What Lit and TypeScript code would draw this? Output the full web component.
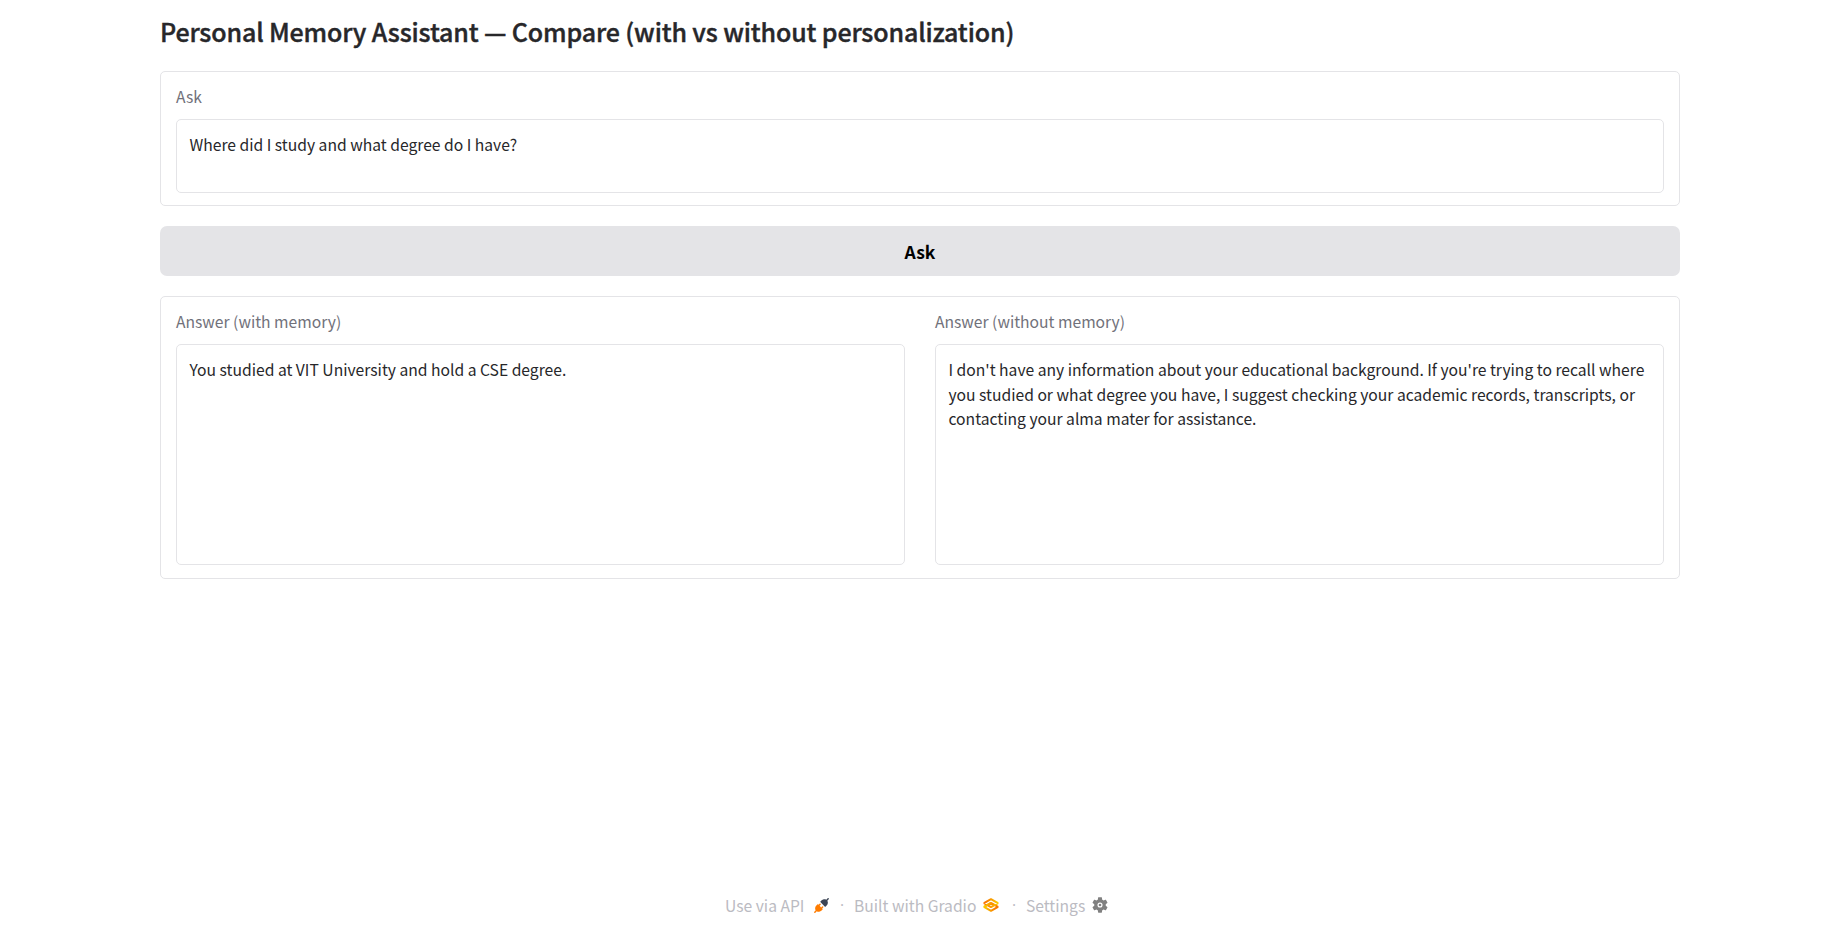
import { LitElement, html, css } from "lit";
import { customElement, property } from "lit/decorators.js";

@customElement("text-field")
class TextField extends LitElement {
  @property() label = "";
  @property() value = "";

  static styles = css`
    :host { display: flex; flex-direction: column; flex: 1; min-width: 0; }
    .label { font-size: 15.65px; line-height: 24px; color: #71717a; margin-bottom: 10px; }
    .box {
      flex: 1; box-sizing: border-box; padding: 13px 13px 13px 12.5px; border: 1px solid #e4e4e7;
      border-radius: 5px; font-size: 15.66px; line-height: 24.5px; color: #27272a;
    }
  `;

  render() {
    return html`<div class="label">${this.label}</div><div class="box">${this.value}</div>`;
  }
}

@customElement("app-root")
class AppRoot extends LitElement {
  static styles = css`
    :host {
      display: flex; flex-direction: column; box-sizing: border-box; height: 934px;
      padding: 13px 168px 16px 160px; background: #fff; color: #27272a;
      font-family: "Noto Sans CJK SC", "Noto Sans", sans-serif;
    }
    .title {
      margin: 0 0 22px; font-size: 25px; font-weight: 500; line-height: 36px;
      letter-spacing: -0.14px; -webkit-text-stroke: 0.4px #27272a;
    }
    .panel {
      display: flex; gap: 30px; box-sizing: border-box; padding: 13px 15px 12px;
      border: 1px solid #e4e4e7; border-radius: 5px;
    }
    .question { height: 135px; }
    .answers { height: 283px; padding-bottom: 13px; }
    .ask {
      margin: 20px 0; height: 50px; border: 0; border-radius: 7px; background: #e4e4e7; padding: 2px 0 0;
      color: #000; font: 600 17.5px/48px "Noto Sans CJK SC", sans-serif; text-align: center;
    }
    .footer {
      display: flex; align-items: center; margin-top: auto; padding-left: 565px;
      height: 26px; font-size: 15.65px; color: #bbbbc2;
    }
    .link { display: flex; align-items: center; }
    .api { width: 105px; }
    .gradio { width: 148px; }
    .icon { display: block; }
    .plug { width: 15px; height: 15px; margin-left: 10px; }
    .logo { width: 20px; height: 20px; margin-left: 5px; }
    .gear { width: 16px; height: 16px; margin-left: 7px; }
    .dot { width: 24px; text-align: center; font-family: "Open Sans", sans-serif; }
  `;

  render() {
    return html`
      <h1 class="title">Personal Memory Assistant — Compare (with vs without personalization)</h1>
      <section class="panel question">
        <text-field label="Ask" value="Where did I study and what degree do I have?"></text-field>
      </section>
      <button class="ask">Ask</button>
      <section class="panel answers">
        <text-field label="Answer (with memory)" value="You studied at VIT University and hold a CSE degree."></text-field>
        <text-field
          label="Answer (without memory)"
          value="I don't have any information about your educational background. If you're trying to recall where you studied or what degree you have, I suggest checking your academic records, transcripts, or contacting your alma mater for assistance."
        ></text-field>
      </section>
      <footer class="footer">
        <span class="link api">Use via API
          <svg class="icon plug" viewBox="0.5 0.5 27 27">
            <path fill="#3c4555" d="M26.94 2.94a1.33 1.33 0 0 0-1.88-1.88L22.57 3.54C21.12 2.59 19.54 2.43 18.18 2.64C16.55 2.89 15.11 3.67 14.39 4.39L12.39 6.39a1.33 1.33 0 0 0 0 1.89L19.72 15.61a1.33 1.33 0 0 0 1.89 0L23.61 13.61C24.33 12.89 25.11 11.45 25.36 9.82C25.57 8.46 25.41 6.88 24.46 5.43Z"/>
            <path fill="#ff7c00" d="M12.28 12.94a1.33 1.33 0 0 0-1.89-1.88L8.67 12.78L8.28 12.39a1.33 1.33 0 0 0-1.89 0L4.39 14.39C3.67 15.11 2.89 16.55 2.64 18.18C2.43 19.54 2.59 21.12 3.54 22.57L1.06 25.06a1.33 1.33 0 0 0 1.88 1.88L5.43 24.46C6.88 25.41 8.46 25.57 9.82 25.36C11.45 25.11 12.89 24.33 13.61 23.61L15.61 21.61a1.33 1.33 0 0 0 0-1.89L15.22 19.33L16.94 17.61a1.33 1.33 0 0 0-1.88-1.89L13.33 17.45L10.55 14.67Z"/>
          </svg>
        </span>
        <span class="dot">·</span>
        <span class="link gradio">Built with Gradio
          <svg class="icon logo" viewBox="0 0 576 576" fill="none" stroke-width="59" stroke-linejoin="bevel">
            <defs>
              <linearGradient id="lower" x1="60" y1="341" x2="429" y2="341" gradientUnits="userSpaceOnUse">
                <stop stop-color="#f9d100"/><stop offset="1" stop-color="#f97700"/>
              </linearGradient>
              <linearGradient id="upper" x1="513" y1="231" x2="143" y2="231" gradientUnits="userSpaceOnUse">
                <stop stop-color="#f9d100"/><stop offset="1" stop-color="#f97700"/>
              </linearGradient>
            </defs>
            <path stroke="url(#lower)" d="M287.5 229L86 344.5L287.5 460L489 344.5L287.5 229Z"/>
            <path stroke="url(#upper)" d="M287.5 116L86 231.5L287.5 347L489 231.5L287.5 116Z"/>
            <path stroke="url(#lower)" d="M86 344L288 229"/>
          </svg>
        </span>
        <span class="dot">·</span>
        <span class="link">Settings
          <svg class="icon gear" viewBox="2 2 20 20" fill="#808080">
            <path d="M19.14 12.94c.04-.3.06-.61.06-.94 0-.32-.02-.64-.07-.94l2.03-1.58c.18-.14.23-.41.12-.61l-1.92-3.32c-.12-.22-.37-.29-.59-.22l-2.39.96c-.5-.38-1.03-.7-1.62-.94l-.36-2.54c-.04-.24-.24-.41-.48-.41h-3.84c-.24 0-.43.17-.47.41l-.36 2.54c-.59.24-1.13.57-1.62.94l-2.39-.96c-.22-.08-.47 0-.59.22L2.74 8.87c-.12.21-.08.47.12.61l2.03 1.58c-.05.3-.09.63-.09.94s.02.64.07.94l-2.03 1.58c-.18.14-.23.41-.12.61l1.92 3.32c.12.22.37.29.59.22l2.39-.96c.5.38 1.03.7 1.62.94l.36 2.54c.05.24.24.41.48.41h3.84c.24 0 .44-.17.47-.41l.36-2.54c.59-.24 1.13-.56 1.62-.94l2.39.96c.22.08.47 0 .59-.22l1.92-3.32c.12-.22.07-.47-.12-.61l-2.01-1.58zM12 15.2a3.2 3.2 0 1 1 0-6.4 3.2 3.2 0 0 1 0 6.4z"/>
            <circle cx="12" cy="12" r="1.7"/>
          </svg>
        </span>
      </footer>
    `;
  }
}
